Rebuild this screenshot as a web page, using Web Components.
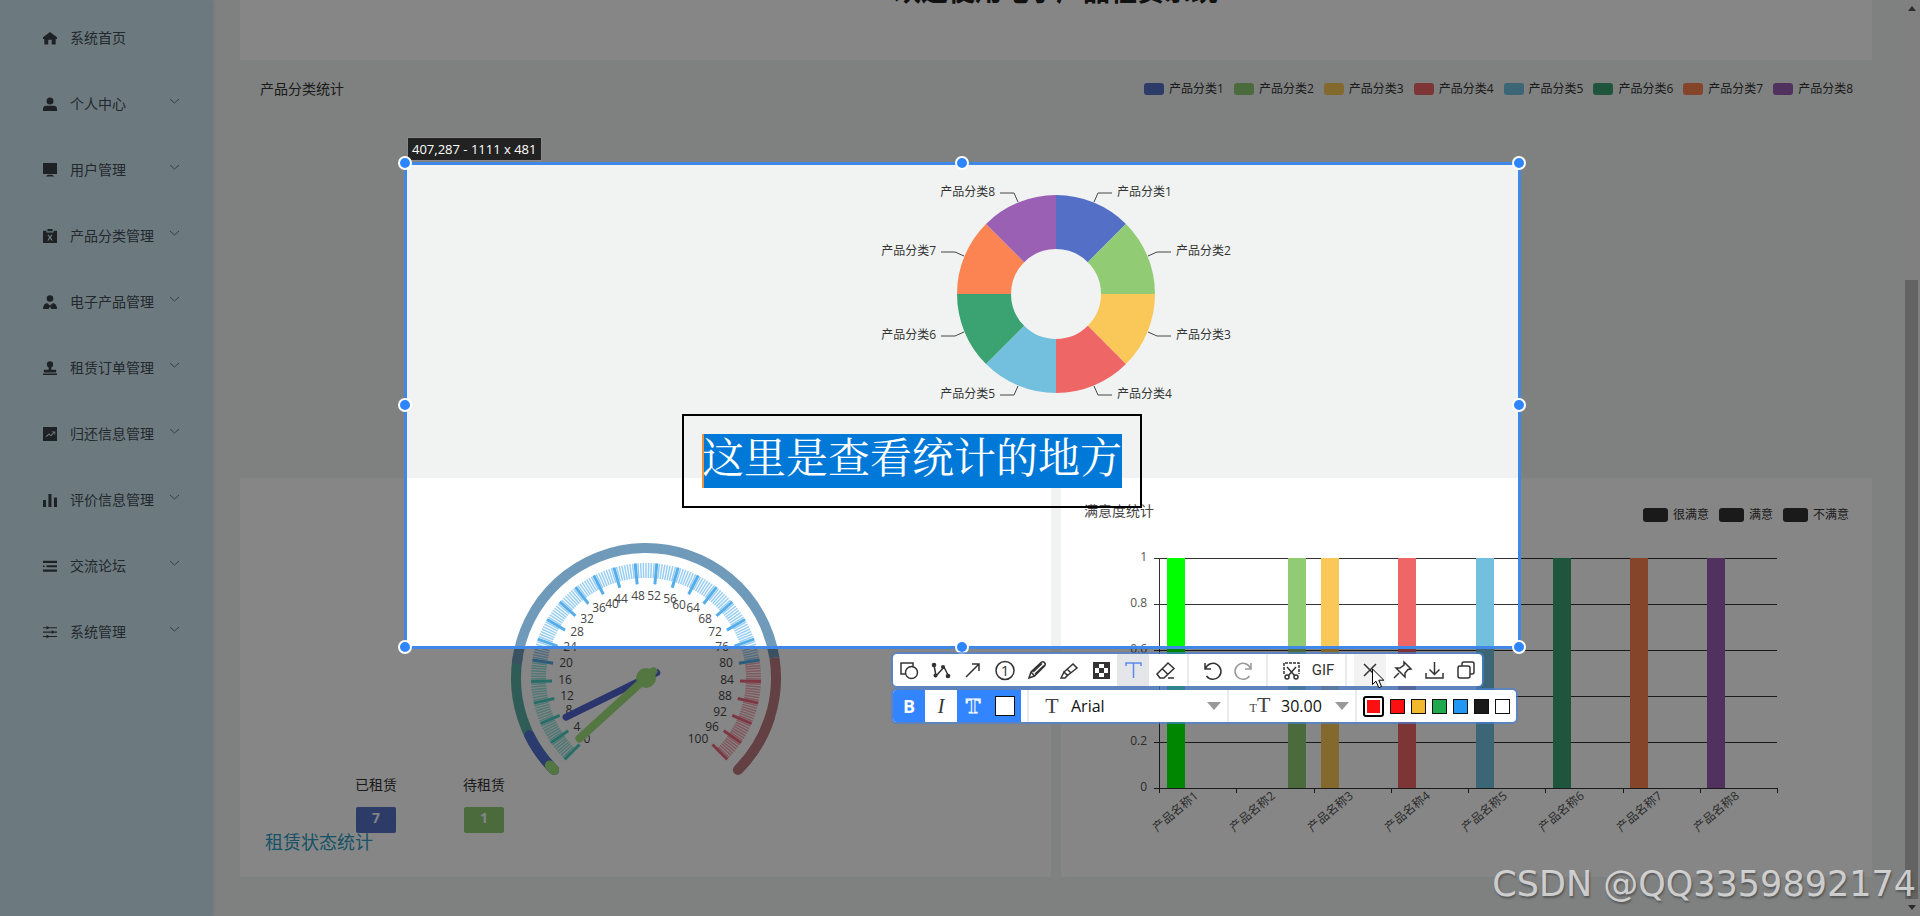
<!DOCTYPE html>
<html lang="zh-CN">
<head>
<meta charset="utf-8">
<title>电子产品租赁系统</title>
<style>
html, body { margin: 0; }
body { font-family: "Open Sans", "Noto Sans CJK SC", sans-serif; font-size: 14px; color: #333; background: #f1f3f3; }
</style>
</head>
<body>
<rental-desktop></rental-desktop>
<script>
const define = (name, render) => customElements.define(name, class extends HTMLElement {
  constructor() {
    super();
    this.attachShadow({ mode: 'open' });
  }
  connectedCallback() {
    this.shadowRoot.innerHTML = render(this);
  }
});

const COLORS = ['#5470c6', '#91cc75', '#fac858', '#ee6666', '#73c0de', '#3ba272', '#fc8452', '#9a60b4'];

/* ---------- side navigation ---------- */
const NAV_ICONS = {
  home: '<path d="M8 1 0 7v2h1.500v6.500H6V10h4v5.500h4.500V9H16V7z"/>',
  user: '<circle cx="8" cy="4.500" r="4"/><path d="M0 16v-2.500Q0 10 4 10h8q4 0 4 3.500V16z"/>',
  monitor: '<path d="M0 0h16v12.500H0zM3 15.500 5.500 13.500h5l2.500 2z"/>',
  clip: '<path fill-rule="evenodd" d="M0 2h4v2h8V2h4v14H0zM5 6.500 7 9.500 5 13h1.500L8 10.500 9.500 13H11L9 9.500l2-3H9.500L8 8.500 6.500 6.500zM5 0h6v2.500H5z"/>',
  agent: '<circle cx="8" cy="4" r="3.800"/><path d="M0 16q0-6 4.500-7L8 12l3.500-3q4.500 1 4.500 7H9.500L8 13l-1.500 3z"/>',
  stamp: '<circle cx="8" cy="4" r="3.600"/><path d="M6.500 6h3v4H15v3H1v-3h5.500zM0 14.300h16V16H0z"/>',
  trend: '<path fill-rule="evenodd" d="M0 0h16v16H0zM3 10.500l1 1L7 8.800l2 1.700 4-4v2h1V5h-4v1h2L9 9 7 7.300z"/>',
  bars: '<path d="M0 8h3.500v8H0zM6.200 1h3.500v15H6.200zM12.500 5H16v11h-3.500z"/>',
  list: '<path d="M0 2h16v2.500H0zM4 7h12v2.500H4zM0 12h16v2.500H0zM0 7l3 1.200L0 9.500z"/>',
  sliders: '<path d="M0 2.500h4V1l3 1.500h9v1.300H7L4 5V3.800H0zM0 7.500h10V6l3 1.500h3v1.300h-3L10 10V8.800H0zM0 12.500h4V11l3 1.500h9v1.300H7L4 15v-1.200H0z"/>'
};

define('nav-item', el => `
  <style>
    :host { display: block; }
    a { display: flex; align-items: center; height: 66px; padding: 0 32px 0 43px; box-sizing: border-box; color: #444c54; text-decoration: none; line-height: 20px; }
    .icon { width: 14px; height: 14px; margin-right: 13px; fill: #3c4248; }
    .arrow { width: 11px; height: 12px; margin-left: auto; padding-bottom: 6px; fill: none; stroke: #6a767e; }
  </style>
  <a href="#">
    <svg class="icon" viewBox="0 0 16 16">${NAV_ICONS[el.getAttribute('icon')]}</svg>
    <slot></slot>
    ${el.hasAttribute('leaf') ? '' : '<svg class="arrow" viewBox="0 0 11 12"><path d="M1 4l4.500 4L10 4"/></svg>'}
  </a>`);

define('side-nav', () => `
  <style>
    :host { display: block; background: #cee8f4; box-shadow: 0 0 4px #b9cbe0; position: relative; }
    nav { padding-top: 5px; }
  </style>
  <nav>
    <nav-item icon="home" leaf>系统首页</nav-item>
    <nav-item icon="user">个人中心</nav-item>
    <nav-item icon="monitor">用户管理</nav-item>
    <nav-item icon="clip">产品分类管理</nav-item>
    <nav-item icon="agent">电子产品管理</nav-item>
    <nav-item icon="stamp">租赁订单管理</nav-item>
    <nav-item icon="trend">归还信息管理</nav-item>
    <nav-item icon="bars">评价信息管理</nav-item>
    <nav-item icon="list">交流论坛</nav-item>
    <nav-item icon="sliders">系统管理</nav-item>
  </nav>`);

/* ---------- chart legend ---------- */
define('legend-item', el => {
  const w = el.getAttribute('swatch') || 20;
  return `
  <style>
    :host { display: flex; align-items: center; gap: 5px; font-size: 12px; line-height: 18px; color: #333; }
    i { width: ${w}px; height: ${w > 20 ? 14 : 12}px; border-radius: 3px; background: ${el.getAttribute('color')}; }
  </style>
  <i></i><slot></slot>`;
});

/* ---------- category ring ---------- */
function ringMarkup() {
  const at = (r, deg) => {
    const a = (deg - 90) * Math.PI / 180;
    return (r * Math.cos(a)).toFixed(2) + ' ' + (r * Math.sin(a)).toFixed(2);
  };
  let out = '';
  COLORS.forEach((c, i) => {
    out += `<path fill="${c}" d="M${at(99, i * 45)}A99 99 0 0 1 ${at(99, i * 45 + 45)}L${at(45, i * 45 + 45)}A45 45 0 0 0 ${at(45, i * 45)}z"/>`;
  });
  const spots = [[1, 1, -1, 0], [2, 1, -1, 1], [3, 1, 1, 1], [4, 1, 1, 0], [5, -1, 1, 0], [6, -1, 1, 1], [7, -1, -1, 1], [8, -1, -1, 0]];
  spots.forEach(([n, sx, sy, side]) => {
    const pts = side ? [[92, 38], [101, 42], [115, 42]] : [[38, 92], [42, 101], [56, 101]];
    out += `<polyline points="${pts.map(p => p[0] * sx + ',' + p[1] * sy).join(' ')}"/>`;
    out += `<text x="${(side ? 120 : 61) * sx}" y="${(side ? 42 : 101) * sy + 3}" text-anchor="${sx > 0 ? 'start' : 'end'}">产品分类${n}</text>`;
  });
  return out;
}

define('category-card', () => `
  <style>
    :host { display: block; min-height: 418px; }
    header { display: flex; justify-content: space-between; align-items: center; padding: 19px 19px 0 20px; }
    h2 { margin: 0; font-size: 14px; font-weight: 400; line-height: 20px; color: #333; }
    .legend { display: flex; gap: 10px; }
    svg { display: block; width: 400px; height: 250px; margin: 70px auto 0; font-size: 12px; }
    polyline { fill: none; stroke: #444; }
    text { fill: #333; }
  </style>
  <header>
    <h2>产品分类统计</h2>
    <div class="legend">${COLORS.map((c, i) => `<legend-item color="${c}">产品分类${i + 1}</legend-item>`).join('')}</div>
  </header>
  <svg viewBox="-200 -125 400 250" role="img" aria-label="产品分类统计">${ringMarkup()}</svg>`);

/* ---------- lease status gauge ---------- */
function gaugeMarkup() {
  const pt = (r, pct) => {
    const a = (225 - 2.7 * pct) * Math.PI / 180;
    return (r * Math.cos(a)).toFixed(2) + ' ' + (-r * Math.sin(a)).toFixed(2);
  };
  const arc = (r, from, to) => `M${pt(r, from)}A${r} ${r} 0 ${(to - from) * 2.7 > 180 ? 1 : 0} 1 ${pt(r, to)}`;
  const ring = (from, to, color, cap) => `<path d="${arc(130, from, to)}" fill="none" stroke="${color}" stroke-width="10" stroke-linecap="${cap}"/>`;
  let out = ring(0, 20, '#5cb0a8', 'round') + ring(90, 100, '#bd7a80', 'round') + ring(80, 100, '#bd7a80', 'butt') + ring(19, 80, '#6f9ab9', 'butt')
    + ring(0, 7, '#5470d0', 'round') + ring(0, 1, '#a0e07c', 'round');
  const tone = v => v < 20 ? '#4fd0c4' : v <= 80 ? '#55aeea' : '#ee6a80';
  for (let v = 0; v <= 100; v += 0.5) {
    out += `<path d="M${pt(115, v)}L${pt(100, v)}" stroke="${tone(v)}" stroke-width="1.500" stroke-opacity=".6"/>`;
  }
  for (let v = 0; v <= 100; v += 4) {
    out += `<path d="M${pt(115, v)}L${pt(94, v)}" stroke="${tone(v)}" stroke-width="3"/>`;
  }
  const marks = [[0, -59, 61], [4, -69, 49], [8, -77, 32], [12, -79, 18], [16, -81, 2], [20, -80, -15], [24, -76, -31], [28, -69, -46], [32, -59, -59],
    [36, -47, -70], [40, -34, -74], [44, -25, -79], [48, -8, -82], [52, 8, -82], [56, 24, -79], [60, 33, -73], [64, 47, -70], [68, 59, -59],
    [72, 69, -46], [76, 76, -31], [80, 80, -15], [84, 81, 2], [88, 79, 18], [92, 74, 34], [96, 66, 49], [100, 52, 61]];
  marks.forEach(([v, x, y]) => { out += `<text x="${x}" y="${y + 4}" text-anchor="middle">${v}</text>`; });
  out += `<path d="M${pt(-12, 7)}L${pt(89, 7)}" stroke="#5064d0" stroke-width="7" stroke-linecap="round"/>`;
  out += `<path d="M${pt(-10, 1)}L${pt(90, 1)}" stroke="#a0e07c" stroke-width="8" stroke-linecap="round"/><circle r="10" fill="#a0e07c"/>`;
  return out;
}

define('status-card', () => `
  <style>
    :host { display: block; background: #fff; }
    svg { display: block; width: 280px; height: 235px; margin: 60px auto 0; font-size: 12px; overflow: visible; }
    text { fill: #464646; }
    dl { display: flex; gap: 66px; margin: 2px 0 0 115px; }
    div { width: 42px; }
    dt { text-align: center; line-height: 20px; color: #333; }
    dd { width: 40px; height: 26px; margin: 12px auto 0; border-radius: 2px; text-align: center; font-weight: 700; line-height: 22px; color: #f4fff8; }
    .done { background: #5470c6; }
    .wait { background: #91cc75; }
    h2 { margin: -3px 0 0 25px; font-size: 18px; font-weight: 400; line-height: 24px; color: #2c9cc4; position: relative; }
  </style>
  <svg viewBox="-140 -140 280 235" role="img" aria-label="租赁状态统计">${gaugeMarkup()}</svg>
  <dl>
    <div><dt>已租赁</dt><dd class="done">7</dd></div>
    <div><dt>待租赁</dt><dd class="wait">1</dd></div>
  </dl>
  <h2>租赁状态统计</h2>`);

/* ---------- satisfaction bars ---------- */
function barsMarkup() {
  let out = '';
  for (let i = 0; i <= 5; i++) {
    const y = 248 - 46 * i;
    out += `<path class="axis" d="M93 ${y}.5H716"/><text x="86" y="${y + 3}" text-anchor="end">${['0', '0.2', '0.4', '0.6', '0.8', '1'][i]}</text>`;
  }
  out += '<path class="axis" d="M98.5 18v230"/>';
  const left = [106, 227, 260, 337, 415, 492, 569, 646];
  const fills = ['#00ff00', ...COLORS.slice(1)];
  left.forEach((x, i) => { out += `<rect x="${x}" y="18" width="18" height="230" fill="${fills[i]}"/>`; });
  for (let i = 0; i <= 8; i++) out += `<path class="axis" d="M${Math.round(98 + 77.25 * i)}.5 248v5"/>`;
  for (let i = 0; i < 8; i++) {
    out += `<text text-anchor="end" transform="translate(${Math.round(138 + 77.25 * i)} 257) rotate(-40)">产品名称${i + 1}</text>`;
  }
  return out;
}

define('satisfaction-card', () => `
  <style>
    :host { display: block; background: #fff; }
    header { display: flex; justify-content: space-between; padding: 22px 23px 0; }
    h2 { margin: 0; font-size: 14px; font-weight: 400; line-height: 22px; color: #464646; }
    .legend { display: flex; gap: 10px; padding-top: 6px; }
    svg { display: block; width: 100%; height: auto; margin-top: 16px; font-size: 12px; }
    .axis { fill: none; stroke: #333; }
    text { fill: #555; }
  </style>
  <header>
    <h2>满意度统计</h2>
    <div class="legend">
      <legend-item swatch="25" color="#333">很满意</legend-item>
      <legend-item swatch="25" color="#333">满意</legend-item>
      <legend-item swatch="25" color="#333">不满意</legend-item>
    </div>
  </header>
  <svg viewBox="0 0 811 300" role="img" aria-label="满意度统计">${barsMarkup()}</svg>`);

/* ---------- page ---------- */
define('dashboard-page', () => `
  <style>
    :host { display: grid; grid-template-columns: 212px 1fr 17px; min-height: 100vh; }
    main { padding: 0 31px 39px 28px; }
    .hero { height: 60px; overflow: hidden; background: #fff; text-align: center; }
    h1 { margin: -27px 0 0; font-size: 27px; line-height: 36px; color: #222; }
    .pair { display: grid; grid-template-columns: 1fr 1fr; gap: 10px; min-height: 399px; }
    .bar { display: flex; flex-direction: column; align-items: center; justify-content: space-between; background: #f3f3f3; padding: 6px 0; }
    .bar b { width: 13px; flex: 1; margin: 269px 0 6px; background: #bdbdbd; }
    .bar svg { width: 8px; height: 5px; fill: #555; }
  </style>
  <side-nav></side-nav>
  <main>
    <div class="hero"><h1>欢迎使用电子产品租赁系统</h1></div>
    <category-card></category-card>
    <div class="pair"><status-card></status-card><satisfaction-card></satisfaction-card></div>
  </main>
  <div class="bar">
    <svg viewBox="0 0 8 5"><path d="M4 0l4 5H0z"/></svg><b></b><svg viewBox="0 0 8 5"><path d="M0 0h8L4 5z"/></svg>
  </div>`);

/* ---------- capture selection ---------- */
define('capture-frame', () => `
  <style>
    :host { display: block; position: absolute; left: 404px; top: 162px; width: 1111px; height: 481px; border: 3px solid #4088e8; box-shadow: 0 0 0 200vmax rgba(0, 0, 0, .475); }
    .handles { position: absolute; inset: -9px -8px -8px -9px; display: grid; grid-template-columns: auto auto auto; justify-content: space-between; align-content: space-between; }
    .handles i { width: 10px; height: 10px; border: 2px solid #fff; border-radius: 50%; background: #2d86ff; }
    .handles i.none { visibility: hidden; }
    .size { position: absolute; left: 0; top: -28px; padding: 0 4px; height: 24px; border: 1px solid #8a8a8a; background: #222; color: #fff; font-size: 13px; line-height: 22px; white-space: nowrap; box-sizing: border-box; }
  </style>
  <div class="size">407,287 - 1111 x 481</div>
  <div class="handles"><i></i><i></i><i></i><i></i><i class="none"></i><i></i><i></i><i></i><i></i></div>`);

define('text-note', () => `
  <style>
    :host { display: block; position: absolute; left: 682px; top: 414px; padding: 18px; border: 2px solid #000; }
    input { display: block; box-sizing: border-box; width: 420px; height: 54px; margin: 0; padding: 0 0 12px; border: 0; border-left: 2px solid #f0923c; border-radius: 0; outline: 0; background: #0078d7; color: #fff; font: 42px/42px "Noto Serif CJK SC", "Noto Sans CJK SC", serif; text-indent: -2px; }
  </style>
  <input aria-label="文字" value="这里是查看统计的地方">`);

/* ---------- capture tools ---------- */
const TOOLS = {
  shape: '<path d="M12 20H8V9h12v3"/><circle cx="18.500" cy="18.500" r="6"/>',
  poly: '<path d="M9 11l2 11 8-9 4 8"/><g fill="#333" stroke="none"><circle cx="9" cy="11" r="2.300"/><circle cx="10.500" cy="21.500" r="2"/><circle cx="18" cy="13" r="2"/><circle cx="23" cy="22" r="2.300"/></g>',
  arrow: '<path d="M9 23L22 10M15 10h7v7"/>',
  number: '<circle cx="16" cy="16.500" r="9"/><text x="16" y="22" text-anchor="middle" font-size="15" fill="#333" stroke="none">1</text>',
  pencil: '<path d="M8 24l2-6L20 8.500q2-1.500 3.500 0t0 3.500L13.500 22zM10 18l3.500 4M12 18l9-8.500M14 20l9-8.500"/>',
  marker: '<path d="M8 24l3-6 3.500 3.500L12 24zM11 18l9-8 4 4-9.500 7.500M14 15l4 4"/>',
  mosaic: '<rect x="9" y="9" width="15" height="15" stroke-width="2"/><path fill="#333" stroke="none" d="M9 9h5v5H9zM19 9h5v5h-5zM14 14h5v5h-5zM9 19h5v5H9zM19 19h5v5h-5z"/>',
  text: '<path stroke="#5c8ae6" stroke-width="1.500" d="M9 12V9h15v3M16.500 9v15"/>',
  eraser: '<path d="M8 20L19 9l6 5.500L15 24h-4zM13 14.500l6 6M19 24h6"/>',
  undo: '<path d="M9 9v6h6M9.500 14.500a8 8 0 1 1 1 7.500"/>',
  redo: '<path stroke="#999" d="M23 9v6h-6M22.500 14.500a8 8 0 1 0-1 7.500"/>',
  scan: '<path stroke-dasharray="3 1" d="M9 20V9h15v11"/><path d="M12 13l8 9M21 13l-8 9"/><circle cx="12" cy="23" r="2"/><circle cx="21" cy="23" r="2"/>',
  close: '<path d="M10 10l12 12M22 10L10 22"/>',
  pin: '<path d="M8 24l5-5M18 8l7 7-3 .5-3 3.500v4L10 14h4l4-3z"/>',
  save: '<path d="M16.500 8v12M11.500 15.500l5 5 5-5M8 19v5h17v-5"/>',
  copy: '<rect x="8" y="12" width="12" height="12" rx="2"/><path d="M12 12v-2q0-2 2-2h8q2 0 2 2v8q0 2-2 2h-2"/>'
};
const tool = (name, label, cls = '') => `<button type="button" class="${cls}" aria-label="${label}"><svg viewBox="0 0 32 32">${TOOLS[name]}</svg></button>`;

define('capture-toolbar', () => `
  <style>
    :host { display: flex; flex-direction: column; align-items: flex-start; gap: 4px; position: absolute; left: 893px; top: 654px; font-family: "Open Sans", sans-serif; }
    .row { display: flex; align-items: center; height: 32px; background: #fff; border-radius: 4px; box-shadow: 0 0 0 2px rgba(70, 130, 220, .65); overflow: hidden; }
    button { width: 32px; height: 32px; margin: 0; padding: 0; border: 0; background: none; font: 16px "Open Sans", sans-serif; color: #333; }
    svg { display: block; width: 32px; height: 32px; fill: none; stroke: #333; stroke-width: 1.500; }
    .active { background: #e4e6ea; }
    .hover { background: #f2f2f2; }
    .on { background: #3385ff; }
    .gif { font: 15px Roboto, sans-serif; }
    hr { width: 2px; height: 32px; margin: 0 7px 0 6px; border: 0; background: #e9ebee; }
    .bold { color: #fff; font-weight: 700; font-size: 18px; }
    .italic { font: italic 20px "Liberation Serif", serif; }
    .outline { font: 700 22px "Liberation Serif", serif; color: #3385ff; -webkit-text-stroke: 1px #fff; }
    .fill i { display: block; width: 18px; height: 18px; margin: auto; border: 1px solid #111; background: #fff; }
    .glyph { width: 32px; text-align: center; font: 22px/32px "Liberation Serif", serif; color: #444; }
    .glyph small { font-size: 12px; }
    label { display: flex; align-items: center; }
    select { appearance: none; margin: 0; padding: 0; border: 0; outline: 0; background: none; font: 16px/24px "Open Sans", sans-serif; color: #111; }
    .family { width: 136px; margin-left: 3px; }
    .sizes { padding-left: 8px; }
    .points { width: 54px; margin-left: 5px; }
    label svg { width: 14px; height: 8px; fill: #999; stroke: none; }
    .swatches { display: flex; align-items: center; gap: 6px; padding-right: 6px; }
    .swatches button { width: 15px; height: 15px; border: 1px solid #111; }
    .swatches .current { width: 21px; height: 21px; margin-left: -1px; border: 2px solid #000; border-radius: 3px; padding: 2px; background-clip: content-box; }
  </style>
  <div class="row">
    ${tool('shape', '形状')}${tool('poly', '折线')}${tool('arrow', '箭头')}${tool('number', '序号')}${tool('pencil', '画笔')}${tool('marker', '记号笔')}${tool('mosaic', '马赛克')}${tool('text', '文字', 'active')}${tool('eraser', '橡皮擦')}
    <hr>${tool('undo', '撤销')}${tool('redo', '重做')}
    <hr>${tool('scan', '长截图')}<button type="button" class="gif">GIF</button>
    <hr>${tool('close', '关闭', 'hover')}${tool('pin', '贴图')}${tool('save', '保存')}${tool('copy', '复制')}
  </div>
  <div class="row">
    <button type="button" class="on bold">B</button><button type="button" class="italic">I</button><button type="button" class="on outline">T</button><button type="button" class="on fill" aria-label="背景"><i></i></button>
    <hr>
    <label><span class="glyph">T</span><select class="family" aria-label="字体"><option>Arial</option></select><svg viewBox="0 0 14 8"><path d="M0 0h14L7 8z"/></svg></label>
    <hr>
    <label class="sizes"><span class="glyph"><small>T</small>T</span><select class="points" aria-label="字号"><option>30.00</option></select><svg viewBox="0 0 14 8"><path d="M0 0h14L7 8z"/></svg></label>
    <hr>
    <div class="swatches">
      <button type="button" class="current" aria-label="当前颜色" style="background-color:#fa1010"></button>
      ${['#fa1010', '#f2b92f', '#1eaa4c', '#2196f3', '#1a1a1a', '#ffffff'].map(c => `<button type="button" aria-label="${c}" style="background:${c}"></button>`).join('')}
    </div>
  </div>`);

define('mouse-pointer', () => `
  <style>
    :host { display: block; position: absolute; left: 1372px; top: 668px; }
    svg { display: block; width: 13px; height: 21px; }
  </style>
  <svg viewBox="0 0 13 21"><path d="M.5 1v15.500l3.500-3.300 2.800 6.500 2.700-1.200L6.800 12.200h5z" fill="#fff" stroke="#000"/></svg>`);

define('water-mark', () => `
  <style>
    :host { display: block; position: absolute; right: 4px; bottom: 12px; font: 35px/40px "DejaVu Sans", sans-serif; color: rgba(225, 225, 225, .85); text-shadow: 1px 2px 2px rgba(60, 60, 60, .6); white-space: nowrap; }
  </style>
  <slot></slot>`);

define('rental-desktop', () => `
  <style>
    :host { display: block; position: relative; overflow: hidden; min-height: 100vh; }
  </style>
  <dashboard-page></dashboard-page>
  <capture-frame></capture-frame>
  <text-note></text-note>
  <capture-toolbar></capture-toolbar>
  <mouse-pointer></mouse-pointer>
  <water-mark>CSDN @QQ3359892174</water-mark>`);
</script>
</body>
</html>
